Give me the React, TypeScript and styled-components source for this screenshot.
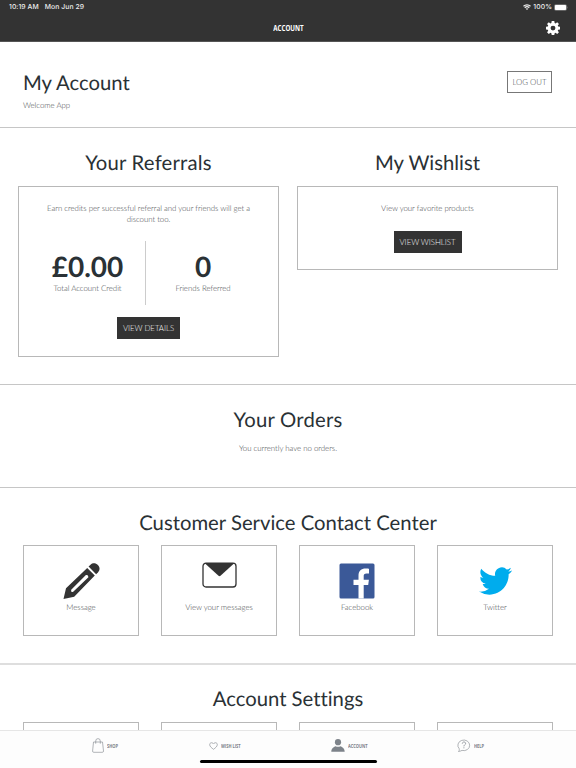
import React from "react";
import styled, { createGlobalStyle } from "styled-components";

const Global = createGlobalStyle`
  * {
    box-sizing: border-box;
    font-variant-ligatures: none !important;
  }
  html, body { margin: 0; padding: 0; }
  body {
    overflow: hidden;
    background: #fff;
    color: #424649;
    font: 300 7.85px/11px Lato, sans-serif;
    letter-spacing: -0.03px;
    text-rendering: geometricPrecision;
  }
  h1, h2, p { margin: 0; }
  svg { display: block; flex: none; }
`;

const Screen = styled.div`
  width: 576px;
  height: 768px;
  display: flex;
  flex-direction: column;
  overflow: hidden;
`;

const Header = styled.header`
  flex: none;
  height: 42px;
  background: #333;
  color: #fff;
  border-bottom: 1px solid #555;
`;

const StatusBar = styled.div`
  height: 14px;
  padding: 0 8px 0 9px;
  display: flex;
  align-items: center;
  font: 500 6.8px/14px Inter, sans-serif;
  letter-spacing: 0.07px;
  color: #eee;
`;

const StatusDate = styled.span`
  margin-left: 6px;
`;

const StatusRight = styled.div`
  margin-left: auto;
  display: flex;
  align-items: center;
  gap: 2px;
`;

const TitleBar = styled.div`
  height: 28px;
  padding: 0 16px;
  display: grid;
  grid-template-columns: 1fr auto 1fr;
  align-items: center;
`;

const Condensed = styled.span<{ $size: number; $ratio: number; $origin: string }>`
  display: inline-block;
  font: 700 ${(p) => p.$size}px/12px "Open Sans", sans-serif;
  transform: scaleX(${(p) => p.$ratio});
  transform-origin: ${(p) => p.$origin} center;
`;

const TitleSlot = styled.div`
  padding-top: 1px;
`;

const GearButton = styled.div`
  justify-self: end;
`;

const Content = styled.main`
  flex: 1;
  min-height: 0;
  overflow: hidden;
  display: flex;
  flex-direction: column;
`;

const Section = styled.section<{ $height: number; $soft?: boolean }>`
  flex: none;
  height: ${(p) => p.$height}px;
  border-bottom: ${(p) => (p.$soft ? "2px solid #dedede" : "1px solid #c6c6c6")};
  text-align: center;
`;

const AccountSection = styled(Section)`
  display: flex;
  justify-content: space-between;
  align-items: flex-start;
  text-align: left;
  padding: 28px 24px 0 23px;
`;

const Heading = styled.h2<{ $top?: number; $tracking?: number }>`
  padding-top: ${(p) => p.$top ?? 22}px;
  font: 400 20.3px/26px Lato, sans-serif;
  letter-spacing: ${(p) => p.$tracking ?? 0}px;
  color: #2a3135;
`;

const Copy = styled.p<{ $top: number }>`
  padding-top: ${(p) => p.$top}px;
`;

const Button = styled.button<{ $width: number; $outline?: boolean }>`
  display: block;
  width: ${(p) => p.$width}px;
  height: 22px;
  margin: 0 auto;
  padding: 0;
  border: 1px solid ${(p) => (p.$outline ? "#777" : "#333")};
  background: ${(p) => (p.$outline ? "#fff" : "#333")};
  color: ${(p) => (p.$outline ? "#424649" : "#f4f4f4")};
  font: 300 7.85px/20px Lato, sans-serif;
  letter-spacing: -0.03px;
  white-space: nowrap;
`;

const LogoutSlot = styled.div`
  padding-top: 1px;
`;

const Columns = styled.div`
  display: grid;
  grid-template-columns: 261px 261px;
  gap: 18px;
  padding: 0 18px;
`;

const Panel = styled.div<{ $height: number }>`
  height: ${(p) => p.$height}px;
  margin-top: 10px;
  padding: 16px 26px 0;
  border: 1px solid #b8b8b8;
`;

const Stats = styled.div`
  display: grid;
  grid-template-columns: 116px 1fr;
  margin: 16px -8px 12px -15px;
`;

const Stat = styled.div<{ $divider?: boolean }>`
  height: 64px;
  padding-top: 9px;
  border-right: ${(p) => (p.$divider ? "1px solid #ccc" : "0")};
`;

const Amount = styled.div`
  font: 700 28px/32px Lato, sans-serif;
  color: #2a3135;
  margin-bottom: 1px;
`;

const WishlistAction = styled.div`
  padding-top: 17px;
`;

const Tiles = styled.div<{ $top?: number }>`
  display: grid;
  grid-template-columns: repeat(4, 116px);
  column-gap: 22px;
  padding: ${(p) => p.$top ?? 9}px 23px 0;
`;

const Tile = styled.div`
  height: 91px;
  padding-top: 16px;
  border: 1px solid #b8b8b8;
  display: flex;
  flex-direction: column;
  align-items: center;
`;

const TileIcon = styled.div<{ $drop: number }>`
  height: 40px;
  padding-top: ${(p) => p.$drop}px;
  display: flex;
  align-items: flex-start;
  justify-content: center;
`;

const TabBar = styled.nav`
  flex: none;
  height: 38px;
  border-top: 1px solid #e6e6e6;
  background: #fdfdfd;
  display: flex;
  flex-direction: column;
  align-items: center;
  color: #7d838a;
`;

const Tabs = styled.div`
  width: 576px;
  height: 29px;
  padding-left: 92px;
  display: grid;
  grid-template-columns: 117px 122px 126px 1fr;
  align-items: center;
`;

const Tab = styled.div`
  display: flex;
  align-items: center;
  gap: 3px;
`;

const HomeIndicator = styled.div`
  width: 177px;
  height: 3px;
  border-radius: 2px;
  background: #000;
`;

const WifiIcon = () => (
  <svg width="8" height="6" viewBox="0 0 16 12" fill="none" stroke="#eee" strokeWidth="2.4">
    <path d="M1 4.5a10 10 0 0 1 14 0M3.5 7.6a6.4 6.4 0 0 1 9 0" />
    <path d="M8 12 5.5 9.5a3.6 3.6 0 0 1 5 0z" fill="#eee" stroke="none" />
  </svg>
);

const BatteryIcon = () => (
  <svg width="14" height="7" viewBox="0 0 14 7">
    <rect x=".3" y=".5" width="12.4" height="6" rx="1.6" fill="none" stroke="#999" strokeWidth=".5" />
    <rect x=".8" y="1" width="11.4" height="5" rx="1" fill="#fff" />
    <path d="M13.3 2.5q.7 1 0 2z" fill="#aaa" />
  </svg>
);

const GearIcon = () => (
  <svg width="14" height="14" viewBox="0 0 24 24" fill="#fff">
    <path
      fillRule="evenodd"
      d="M9.8 0h4.4l.6 3.4 1.6.7 2.8-2 3 3-2 2.8.7 1.6 3.1.5v4.4l-3.1.5-.7 1.6 2 2.8-3 3-2.8-2-1.6.7-.6 3h-4.4l-.6-3-1.6-.7-2.8 2-3-3 2-2.8-.7-1.6L0 14.4V10l3.100-.5.7-1.6-2-2.8 3-3 2.8 2 1.6-.7zM12 8a4.200 4.200 0 1 0 0 8.400A4.200 4.200 0 0 0 12 8z"
    />
  </svg>
);

const PencilIcon = () => (
  <svg width="38" height="38" viewBox="0 0 38 38" fill="#333">
    <path fillRule="evenodd" d="M1.5 37 4 26.2 25.2 5.9l7.6 7.6L12.2 34.8zM9.2 27.8q-.8 2.8 2 2L26.4 15.2q0-2.6-2.5-2.1z" />
    <path d="M26.6 4.6 28.5 2.7c4.8-4.4 12.2 2.6 7.6 7.5l-2 2z" />
  </svg>
);

const EnvelopeIcon = () => (
  <svg width="35" height="26" viewBox="0 0 35 26">
    <rect x="1" y="1.2" width="33" height="23.8" rx="3" fill="#fff" stroke="#333" strokeWidth="1.3" />
    <path d="M2.5 1h30L18.5 13.7q-1 .9-2 0z" fill="#333" />
  </svg>
);

const FacebookIcon = () => (
  <svg width="36" height="36" viewBox="0 0 36 36">
    <rect x=".5" y=".5" width="35" height="35" rx="1.5" fill="#3b5998" />
    <path d="M19.5 35.5V22h-5v-5.2h5v-4.1c0-4.700 2.900-7.200 7-7.200 1.900 0 3 .1 3.500.2v4.700h-2.500c-2.200 0-2.800 1.100-2.800 2.700v3.700h5.200l-.7 5.200h-4.500v13.500z" fill="#fff" />
  </svg>
);

const TwitterIcon = () => (
  <svg width="33" height="28" viewBox="0 2 24 20" preserveAspectRatio="none" fill="#00aced">
    <path d="M23.953 4.57a10 10 0 0 1-2.825.775 4.958 4.958 0 0 0 2.163-2.723c-.951.555-2.005.959-3.127 1.184a4.920 4.920 0 0 0-8.384 4.482C7.690 8.095 4.067 6.130 1.640 3.162a4.822 4.822 0 0 0-.666 2.475c0 1.710.870 3.213 2.188 4.096a4.904 4.904 0 0 1-2.228-.616v.060a4.923 4.923 0 0 0 3.946 4.827 4.996 4.996 0 0 1-2.212.085 4.936 4.936 0 0 0 4.604 3.417 9.867 9.867 0 0 1-6.102 2.105c-.390 0-.779-.023-1.170-.067a13.995 13.995 0 0 0 7.557 2.209c9.053 0 13.998-7.496 13.998-13.985 0-.210 0-.420-.015-.630a9.935 9.935 0 0 0 2.460-2.548z" />
  </svg>
);

const BagIcon = () => (
  <svg width="12" height="15" viewBox="0 0 12 15" fill="none" stroke="#7d838a" strokeWidth=".6">
    <path d="M1.5 4h9l1 9q0 1.300-1.100 1.300H1.700Q.5 14.300.6 13zM3.700 5.700V3.100a2.300 2.500 0 0 1 4.600 0v2.600" />
  </svg>
);

const HeartIcon = () => (
  <svg width="9" height="8" viewBox="0 0 9 8" fill="none" stroke="#7d838a" strokeWidth=".6">
    <path d="M4.5 7.300C2.500 5.800.7 4.500.7 2.600.7.500 3.400 0 4.500 2 5.600 0 8.300.5 8.300 2.600c0 1.900-1.800 3.200-3.800 4.700z" />
  </svg>
);

const PersonIcon = () => (
  <svg width="14" height="13" viewBox="0 0 14 13" fill="#7d838a">
    <circle cx="7" cy="3.2" r="3.1" />
    <path d="M.3 12.700C.4 9.300 2.600 8 4.600 7.200q2.400 1.100 4.800 0c2 .8 4.200 2.100 4.300 5.500z" />
  </svg>
);

const HelpIcon = () => (
  <svg width="14" height="14" viewBox="0 0 14 14" fill="none" stroke="#7d838a" strokeWidth=".6">
    <path d="M2.2 9.700A5.900 5.300 0 1 1 5 11.400c-1.200.5-2 1-3.500 1.100.8-.8.900-1.700.7-2.800z" />
    <path d="M5.3 4.600c.1-2.200 3.400-2 3.300-.1 0 1.300-1.700 1.300-1.700 2.900M6.900 8.300v1" strokeWidth=".8" />
  </svg>
);

const contacts = [
  { label: "Message", icon: <PencilIcon />, drop: 0 },
  { label: "View your messages", icon: <EnvelopeIcon />, drop: 0 },
  { label: "Facebook", icon: <FacebookIcon />, drop: 1 },
  { label: "Twitter", icon: <TwitterIcon />, drop: 5 },
];

const tabs = [
  { label: "SHOP", icon: <BagIcon /> },
  { label: "WISH LIST", icon: <HeartIcon /> },
  { label: "ACCOUNT", icon: <PersonIcon /> },
  { label: "HELP", icon: <HelpIcon /> },
];

export default function App() {
  return (
    <Screen>
      <Global />
      <Header>
        <StatusBar>
          <span>10:19 AM</span>
          <StatusDate>Mon Jun 29</StatusDate>
          <StatusRight>
            <WifiIcon />
            <span>100%</span>
            <BatteryIcon />
          </StatusRight>
        </StatusBar>
        <TitleBar>
          <span />
          <TitleSlot>
            <Condensed $size={8.4} $ratio={0.74} $origin="center">ACCOUNT</Condensed>
          </TitleSlot>
          <GearButton><GearIcon /></GearButton>
        </TitleBar>
      </Header>
      <Content>
        <AccountSection $height={86}>
          <div>
            <Heading as="h1" $top={0}>My Account</Heading>
            <Copy $top={4}>Welcome App</Copy>
          </div>
          <LogoutSlot><Button $width={45} $outline>LOG OUT</Button></LogoutSlot>
        </AccountSection>
        <Section $height={257}>
          <Columns>
            <div>
              <Heading $tracking={0.2}>Your Referrals</Heading>
              <Panel $height={171}>
                <p>Earn credits per successful referral and your friends will get a discount too.</p>
                <Stats>
                  <Stat $divider>
                    <Amount>£0.00</Amount>
                    <p>Total Account Credit</p>
                  </Stat>
                  <Stat>
                    <Amount>0</Amount>
                    <p>Friends Referred</p>
                  </Stat>
                </Stats>
                <Button $width={63}>VIEW DETAILS</Button>
              </Panel>
            </div>
            <div>
              <Heading>My Wishlist</Heading>
              <Panel $height={84}>
                <p>View your favorite products</p>
                <WishlistAction><Button $width={68}>VIEW WISHLIST</Button></WishlistAction>
              </Panel>
            </div>
          </Columns>
        </Section>
        <Section $height={103}>
          <Heading $tracking={0.2}>Your Orders</Heading>
          <Copy $top={10}>You currently have no orders.</Copy>
        </Section>
        <Section $height={177} $soft>
          <Heading>Customer Service Contact Center</Heading>
          <Tiles>
            {contacts.map((c) => (
              <Tile key={c.label}>
                <TileIcon $drop={c.drop}>{c.icon}</TileIcon>
                <p>{c.label}</p>
              </Tile>
            ))}
          </Tiles>
        </Section>
        <Section $height={150}>
          <Heading $top={21}>Account Settings</Heading>
          <Tiles $top={10}>
            <Tile /><Tile /><Tile /><Tile />
          </Tiles>
        </Section>
      </Content>
      <TabBar>
        <Tabs>
          {tabs.map((t) => (
            <Tab key={t.label}>
              {t.icon}
              <Condensed $size={5.6} $ratio={0.72} $origin="left">{t.label}</Condensed>
            </Tab>
          ))}
        </Tabs>
        <HomeIndicator />
      </TabBar>
    </Screen>
  );
}
